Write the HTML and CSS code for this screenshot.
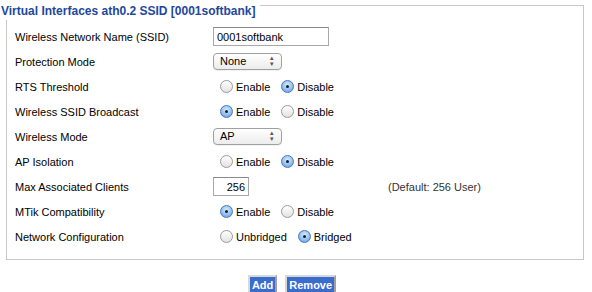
FILE: index.html
```html
<!DOCTYPE html>
<html lang="en">
<head>
  <meta charset="UTF-8" />
  <title>Virtual Interfaces</title>
  <link rel="stylesheet" href="styles.css">
</head>
<body>
  <fieldset class="vif">
    <legend><span>Virtual Interfaces ath0.2 SSID [0001softbank]</span></legend>

    <div class="row">
      <div class="label">Wireless Network Name (SSID)</div>
      <div class="field"><input type="text" class="text ssid" value="0001softbank"></div>
    </div>
    <div class="row">
      <div class="label">Protection Mode</div>
      <div class="field"><div class="select">None</div></div>
    </div>
    <div class="row">
      <div class="label">RTS Threshold</div>
      <div class="field">
        <label class="radio"><span class="dot"></span>Enable</label>
        <label class="radio"><span class="dot on"></span>Disable</label>
      </div>
    </div>
    <div class="row">
      <div class="label">Wireless SSID Broadcast</div>
      <div class="field">
        <label class="radio"><span class="dot on"></span>Enable</label>
        <label class="radio"><span class="dot"></span>Disable</label>
      </div>
    </div>
    <div class="row">
      <div class="label">Wireless Mode</div>
      <div class="field"><div class="select">AP</div></div>
    </div>
    <div class="row">
      <div class="label">AP Isolation</div>
      <div class="field">
        <label class="radio"><span class="dot"></span>Enable</label>
        <label class="radio"><span class="dot on"></span>Disable</label>
      </div>
    </div>
    <div class="row">
      <div class="label">Max Associated Clients</div>
      <div class="field"><input type="text" class="text num" value="256"></div>
      <div class="note">(Default: 256 User)</div>
    </div>
    <div class="row">
      <div class="label">MTik Compatibility</div>
      <div class="field">
        <label class="radio"><span class="dot on"></span>Enable</label>
        <label class="radio"><span class="dot"></span>Disable</label>
      </div>
    </div>
    <div class="row">
      <div class="label">Network Configuration</div>
      <div class="field">
        <label class="radio wide"><span class="dot"></span>Unbridged</label>
        <label class="radio"><span class="dot on"></span>Bridged</label>
      </div>
    </div>
  </fieldset>

  <div class="actions">
    <button class="btn">Add</button>
    <button class="btn">Remove</button>
  </div>
</body>
</html>
```

FILE: styles.css
```css
* {
  margin: 0;
  padding: 0;
  box-sizing: border-box;
}

body {
  font-family: 'Liberation Sans', Arial, sans-serif;
  font-size: 11px;
  color: #000;
  background: #fff;
  padding: 0 8px 0 6px;
}

/* Box */
.vif {
  border: 1px solid #c8c8c8;
  padding: 0 8px 10px;
}

.vif legend {
  height: 11px;
  margin-left: -15px;
  padding: 0;
}

.vif legend span {
  display: block;
  background: #fff;
  padding: 2px 4px 0 1px;
  line-height: 18px;
  font-weight: bold;
  font-size: 12px;
  color: #22479c;
}

.row {
  display: flex;
  align-items: center;
  height: 25px;
}

.row:first-of-type {
  margin-top: 13px;
}

.label {
  width: 198px;
}

.field {
  width: 175px;
  display: flex;
  align-items: center;
}

.note {
  color: #333;
}

/* Inputs */
.text {
  font: inherit;
  font-size: 11px;
  height: 19px;
  border: 1px solid #a8a8a8;
  border-top-color: #8a8a8a;
  padding: 0 3px;
  color: #000;
  outline: none;
}

.ssid {
  width: 116px;
}

.num {
  width: 36px;
  text-align: right;
}

.select {
  position: relative;
  width: 69px;
  height: 17px;
  line-height: 15px;
  padding: 0 6px;
  border: 1px solid #a0a0a0;
  border-radius: 4px;
  background: linear-gradient(#ffffff, #ececec);
  box-shadow: 0 1px 0 rgba(0, 0, 0, 0.05);
}

.select::after {
  content: '\25B4\A\25BE';
  position: absolute;
  right: 7px;
  top: 1px;
  font-size: 7px;
  line-height: 6px;
  white-space: pre;
  color: #555;
}

/* Radios */
.radio {
  display: flex;
  align-items: center;
  margin-right: 11px;
  margin-left: 7px;
}

.radio + .radio {
  margin-left: 0;
}

.dot {
  width: 13px;
  height: 13px;
  border-radius: 50%;
  border: 1px solid #9a9a9a;
  background: linear-gradient(#ffffff, #e2e2e2);
  margin-right: 3px;
  position: relative;
}

.dot.on {
  border-color: #4a78b8;
  background: radial-gradient(circle at 50% 35%, #d7ecff 0%, #8cbcf0 60%, #5a93dc 100%);
}

.dot.on::after {
  content: '';
  position: absolute;
  left: 4px;
  top: 4px;
  width: 3px;
  height: 3px;
  border-radius: 50%;
  background: #1a1a1a;
}

/* Buttons */
.actions {
  display: flex;
  justify-content: center;
  gap: 8px;
  margin-top: 15px;
  padding-right: 6px;
}

.btn {
  font-family: 'Liberation Sans', Arial, sans-serif;
  font-size: 11px;
  font-weight: bold;
  color: #fff;
  background: #3a6cd0;
  border: 2px solid #d8d8d8;
  border-right-color: #a0a0a0;
  border-bottom-color: #a0a0a0;
  padding: 1px 2px;
  height: 20px;
}
```
